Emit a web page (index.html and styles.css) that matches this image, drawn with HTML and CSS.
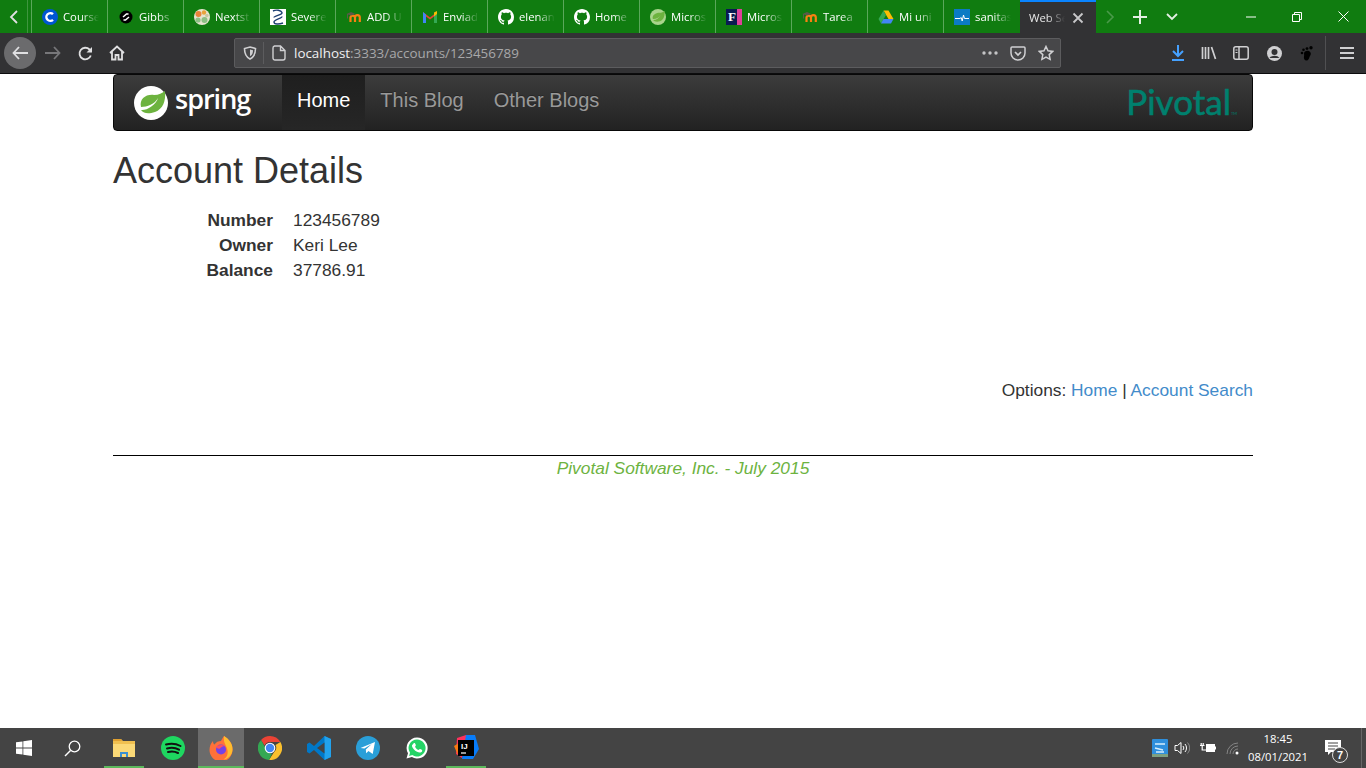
FILE: index.html
```html
<!DOCTYPE html>
<html lang="en">
<head>
    <meta charset="UTF-8">
    <title>Web Service Client</title>
    <link rel="stylesheet" href="styles.css">
</head>
<body>

<!-- browser tabs -->
<div class="tabbar">
    <div class="tab-back"><svg width="12" height="14" viewBox="0 0 12 14"><path d="M9 1L3 7l6 6" class="line-light"/></svg></div>
    <div class="tabs">
        <div class="tab"><svg class="fav" viewBox="0 0 16 16"><circle cx="8" cy="8" r="8" fill="#0056d2"/><path d="M11 5.2A3.9 3.9 0 1 0 11 10.800" fill="none" stroke="#fff" stroke-width="2.400"/></svg><span class="tab-label">Course</span></div>
        <div class="tab"><svg class="fav" viewBox="0 0 16 16"><circle cx="8" cy="8" r="6.500" fill="#000"/><path d="M5 8l3.500-3 2 0M11 8l-3.500 3-2 0" stroke="#fff" stroke-width="1.500" fill="none"/></svg><span class="tab-label">Gibbs</span></div>
        <div class="tab"><svg class="fav" viewBox="0 0 16 16"><circle cx="8" cy="8" r="8" fill="#e8e4d0"/><circle cx="4.500" cy="5" r="3" fill="#e8833a"/><circle cx="10" cy="3.500" r="2.200" fill="#e8a33a"/><circle cx="4" cy="11" r="2.600" fill="#8cc084"/><circle cx="10.500" cy="11" r="3" fill="#8cc084"/><circle cx="12.800" cy="6.500" r="1.800" fill="#c8c8a0"/></svg><span class="tab-label">Nextst</span></div>
        <div class="tab"><svg class="fav" viewBox="0 0 16 16"><rect width="16" height="16" fill="#fff"/><path d="M3 2c3-1.500 8-1 9 1.500S4 6.500 4 8.500" fill="none" stroke="#1d3f72" stroke-width="1.400"/><path d="M12 7.500c0 2-8 3-8 5.500s5 2.500 9 1" fill="none" stroke="#1d3f72" stroke-width="1.400"/></svg><span class="tab-label">Severe</span></div>
        <div class="tab"><svg class="fav" viewBox="0 0 16 16"><use href="#moodle"/></svg><span class="tab-label">ADD U</span></div>
        <div class="tab"><svg class="fav" viewBox="0 0 16 16"><path d="M1 14V3l7 5.500L15 3v11h-3V7.500L8 10.500 4 7.500V14z" fill="#ea4335"/><path d="M1 14V3l3 2.500V14z" fill="#4285f4"/><path d="M15 14V3l-3 2.500V14z" fill="#34a853"/><path d="M12 3.500L15 2v3l-3 2.500z" fill="#fbbc04"/></svg><span class="tab-label">Enviad</span></div>
        <div class="tab"><svg class="fav" viewBox="0 0 16 16"><use href="#octocat"/></svg><span class="tab-label">elenan</span></div>
        <div class="tab"><svg class="fav" viewBox="0 0 16 16"><use href="#octocat"/></svg><span class="tab-label">Home</span></div>
        <div class="tab"><svg class="fav" viewBox="0 0 34 34"><circle cx="17" cy="17" r="17" fill="#a9d48c"/><path d="M31 4c1 10-2 19-10 22-6 2-12 1-15-3C10 25 19 20 23 12c-4 7-12 10-17 9C4 13 12 8 20 8c5 0 8-2 11-4z" fill="#6db33f"/></svg><span class="tab-label">Micros</span></div>
        <div class="tab"><span class="fav fav-f">F</span><span class="tab-label">Micros</span></div>
        <div class="tab"><svg class="fav" viewBox="0 0 16 16"><use href="#moodle"/></svg><span class="tab-label">Tarea</span></div>
        <div class="tab"><svg class="fav" viewBox="0 0 16 16"><path d="M5.500 1.500h5L15.500 10h-5z" fill="#fbbc04"/><path d="M5.500 1.500L.5 10l2.500 4.500L8 6z" fill="#34a853"/><path d="M5.500 10h10L13 14.500H3z" fill="#4285f4"/></svg><span class="tab-label">Mi uni</span></div>
        <div class="tab"><svg class="fav" viewBox="0 0 16 16"><rect width="16" height="16" fill="#0b7bc4"/><path d="M1 9.500h5l1.200-1 1 3.500 1.300-6 1 3.500H15" fill="none" stroke="#fff" stroke-width="1"/></svg><span class="tab-label">sanitas</span></div>
        <div class="tab tab-active"><span class="tab-label">Web Se</span><svg class="tab-close" width="12" height="12" viewBox="0 0 12 12"><path d="M1.500 1.500l9 9M10.500 1.500l-9 9" fill="none" stroke="#c8c8ca" stroke-width="1.800"/></svg></div>
    </div>
    <div class="tab-tools">
        <svg class="tool-next" width="10" height="14" viewBox="0 0 10 14"><path d="M2 1l6 6-6 6" fill="none" stroke="#4a9a4a" stroke-width="1.600"/></svg>
        <svg class="tool-plus" width="14" height="14" viewBox="0 0 14 14"><path d="M7 0v14M0 7h14" stroke="#e4efe4" stroke-width="2"/></svg>
        <svg class="tool-down" width="12" height="8" viewBox="0 0 12 8"><path d="M1 1l5 5 5-5" fill="none" stroke="#e4efe4" stroke-width="1.800"/></svg>
    </div>
    <div class="window-btns">
        <svg width="10" height="10" viewBox="0 0 10 10"><path d="M0 5h10" stroke="#fff"/></svg>
        <svg width="10" height="10" viewBox="0 0 10 10"><path d="M.5 2.500h7v7h-7zM2.500 2.500v-2h7v7h-2" fill="none" stroke="#fff"/></svg>
        <svg width="11" height="11" viewBox="0 0 11 11"><path d="M.5.5l10 10M10.500.5l-10 10" stroke="#fff"/></svg>
    </div>
</div>

<!-- browser toolbar -->
<div class="toolbar">
    <div class="nav-btns">
        <div class="btn-back"><svg width="16" height="14" viewBox="0 0 16 14"><path d="M7 1L1.500 7 7 13M2 7h14" class="line-light"/></svg></div>
        <svg class="btn-forward" width="16" height="14" viewBox="0 0 16 14"><path d="M9 1l5.500 6L9 13M14 7H0" fill="none" stroke="#77777a" stroke-width="1.800"/></svg>
        <svg class="btn-reload" width="15" height="15" viewBox="0 0 15 15"><path d="M12.800 9.500A5.800 5.800 0 1 1 11.500 3.500L13.500 5.500" class="line-light"/><path d="M14 1v5.500H8.500z" fill="#e0e0e2"/></svg>
        <svg class="btn-home" width="16" height="16" viewBox="0 0 16 16"><path d="M1 8l7-6.500L15 8M3 6.500V14.500h3.500V10h3v4.500H13V6.500" class="line-light"/></svg>
    </div>
    <div class="urlbar">
        <svg class="url-shield" width="14" height="14" viewBox="0 0 14 14"><path d="M7 1l5.500 1.500c0 5-1.500 8.500-5.500 10.500C3 11 1.500 7.500 1.500 2.500z" fill="none" stroke="#d0d0d2" stroke-width="1.600"/><path d="M7 3.500l3 .8c0 3-.8 4.700-3 6z" fill="#d0d0d2"/></svg>
        <span class="url-sep"></span>
        <svg class="url-page" width="14" height="16" viewBox="0 0 14 16"><path d="M2.500 1h6L13 5.500V13a2 2 0 0 1-2 2H3a2 2 0 0 1-2-2V3a2 2 0 0 1 1.500-2zM8.500 1v4.500H13" fill="none" stroke="#d0d0d2" stroke-width="1.400"/></svg>
        <span class="url-text"><span class="url-host">localhost</span>:3333/accounts/123456789</span>
        <svg class="url-dots" width="16" height="4" viewBox="0 0 16 4"><circle cx="2" cy="2" r="1.700"/><circle cx="8" cy="2" r="1.700"/><circle cx="14" cy="2" r="1.700"/></svg>
        <svg class="url-pocket" width="16" height="15" viewBox="0 0 16 15"><path d="M2 1h12a1 1 0 0 1 1 1v5a7 7 0 0 1-14 0V2a1 1 0 0 1 1-1z" fill="none" stroke="#d0d0d2" stroke-width="1.500"/><path d="M5 6l3 3 3-3" fill="none" stroke="#d0d0d2" stroke-width="1.700"/></svg>
        <svg class="url-star" width="16" height="16" viewBox="0 0 16 16"><path d="M8 1.500l2 4.300 4.700.6-3.500 3.200.9 4.700L8 12l-4.100 2.300.9-4.700L1.300 6.400 6 5.800z" fill="none" stroke="#d0d0d2" stroke-width="1.500"/></svg>
    </div>
    <div class="tool-icons">
        <svg width="14" height="16" viewBox="0 0 14 16"><path d="M7 0v10M2 6l5 5 5-5" fill="none" stroke="#45a1ff" stroke-width="2"/><path d="M1 15h12" stroke="#45a1ff" stroke-width="2"/></svg>
        <svg width="16" height="14" viewBox="0 0 16 14"><path d="M1.500 1v12M4.500 1v12M7.500 1v12M10.500 1l4 12" fill="none" stroke="#d0d0d2" stroke-width="1.700"/></svg>
        <svg width="16" height="14" viewBox="0 0 16 14"><rect x=".8" y=".8" width="14.400" height="12.400" rx="2" fill="none" stroke="#d0d0d2" stroke-width="1.500"/><path d="M6 1v12" stroke="#d0d0d2" stroke-width="1.500"/><path d="M2.500 4h2M2.500 6.500h2" stroke="#d0d0d2"/></svg>
        <svg class="tool-account" width="15" height="15" viewBox="0 0 15 15"><circle cx="7.500" cy="7.500" r="7.500" fill="#d0d0d2"/><circle cx="7.500" cy="6" r="3" fill="#323234"/><path d="M2.500 12a5.500 4 0 0 1 10 0z" fill="#323234"/></svg>
        <svg class="tool-foot" width="14" height="15" viewBox="0 0 14 15"><path d="M4.500 6c2-2 5-1.500 6 .5s-.5 3-1 4.500-1 3.500-3 3.500-3-2-2.500-4-.5-3 .5-4.500z"/><circle cx="2" cy="7" r="1.300"/><circle cx="3.500" cy="3.800" r="1.300"/><circle cx="7" cy="2.600" r="1.400"/><circle cx="11" cy="1.800" r="1.700"/></svg>
        <span class="tool-sep"></span>
        <svg class="tool-menu" width="14" height="12" viewBox="0 0 14 12"><path d="M0 1h14M0 6h14M0 11h14" stroke="#d0d0d2" stroke-width="1.800"/></svg>
    </div>
</div>

<!-- the page itself -->
<div class="page">
    <div class="container">
        <div class="navbar">
            <div class="brand">
                <svg width="34" height="34" viewBox="0 0 34 34"><circle cx="17" cy="17" r="17" fill="#fff"/><path d="M31 5c1 10-2 18-10 21-6 2-11 2-14-2 5 1 15-5 17-12-3 6-11 9-17 9C5 13 12 8 20 9c5 0 8-2 11-4z" fill="#6db33f"/></svg>
                <span class="brand-name">spring</span>
            </div>
            <ul class="nav-links">
                <li class="active"><a href="#">Home</a></li>
                <li><a href="#">This Blog</a></li>
                <li><a href="#">Other Blogs</a></li>
            </ul>
            <div class="pivotal">Pivotal<small>TM</small></div>
        </div>

        <h1>Account Details</h1>

        <dl class="details">
            <dt>Number</dt><dd>123456789</dd>
            <dt>Owner</dt><dd>Keri Lee</dd>
            <dt>Balance</dt><dd>37786.91</dd>
        </dl>

        <p class="options">Options: <a href="#">Home</a> | <a href="#">Account Search</a></p>

        <hr>
        <p class="footer">Pivotal Software, Inc. - July 2015</p>
    </div>
</div>

<!-- windows taskbar -->
<div class="taskbar">
    <div class="task-start"><svg width="16" height="16" viewBox="0 0 16 16"><path d="M0 2.300l6.500-.9v6.200H0zM7.300 1.300L16 0v7.600H7.300zM0 8.400h6.500v6.200L0 13.700zM7.300 8.400H16V16l-8.700-1.300z" fill="#fff"/></svg></div>
    <div class="task-search"><svg width="17" height="17" viewBox="0 0 17 17"><circle cx="10.500" cy="6.500" r="5.300" fill="none" stroke="#fff" stroke-width="1.300"/><path d="M6.500 10.500L1 16" stroke="#fff" stroke-width="1.500"/></svg></div>
    <div class="task-apps">
        <div class="app running"><svg width="22" height="20" viewBox="0 0 22 20"><path d="M0 1h8l2 2h12v16H0z" fill="#f0c050"/><path d="M0 1h8l1 2H0z" fill="#e0a030"/><path d="M0 6h22v13H0z" fill="#fbd977"/><path d="M7 14h8v5H7z" fill="#3b8fd0"/><path d="M9 16h4v3H9z" fill="#fbd977"/></svg></div>
        <div class="app"><svg width="24" height="24" viewBox="0 0 24 24"><circle cx="12" cy="12" r="12" fill="#1ed760"/><path d="M5 8.500c5-1.500 10-1 14.500 1.500M6 12.500c4.500-1.200 8.500-.8 12 1.200M7 16c3.500-.9 7-.6 10 1" fill="none" stroke="#111" stroke-width="2" stroke-linecap="round"/></svg></div>
        <div class="app running current"><svg width="24" height="24" viewBox="0 0 24 24"><path d="M15 0c5 3 9 8 8.500 14a11.500 11.500 0 0 1-23 0C.5 10 2 7 4 5c0 2 .5 3 1.500 3.500C7 6 9.500 5 12 5c1-2 2-4 3-5z" fill="#ff7139"/><path d="M15 0c5 3 9 8 8.500 14-.5 5-4 9-9 9.500 4-2 5-7 3.500-11C17 9 14 6 15 0z" fill="#ffbd2e"/><circle cx="12" cy="13.500" r="5" fill="#7542e5"/><path d="M7 11c2-2 6-3 9-1-2 0-4 1-5 2.500-1.500.5-3 0-4-1.500z" fill="#ff4f5e"/></svg></div>
        <div class="app"><svg width="24" height="24" viewBox="0 0 24 24"><path d="M12 0a12 12 0 0 1 10.400 6H12a6 6 0 0 0-5.500 3.600L3 4a12 12 0 0 1 9-4z" fill="#ea4335"/><path d="M22.400 6A12 12 0 0 1 11 24l4.800-7.500A6 6 0 0 0 17.500 9z" fill="#fbc02d"/><path d="M3 4l5 8.800A6 6 0 0 0 14 17.700L11 24A12 12 0 0 1 3 4z" fill="#34a853"/><circle cx="12" cy="12" r="5.300" fill="#fff"/><circle cx="12" cy="12" r="4.200" fill="#4285f4"/></svg></div>
        <div class="app"><svg width="24" height="24" viewBox="0 0 24 24"><path d="M17.500 0L24 3v18l-6.500 3L7 14l-4.500 3.500L0 16V8l2.500-1.500L7 10z" fill="#0078c8"/><path d="M17.500 0L24 3v18l-6.500 3z" fill="#22a2ec"/><path d="M17.500 6.500L10 12l7.500 5.500z" fill="#444"/></svg></div>
        <div class="app"><svg width="24" height="24" viewBox="0 0 24 24"><circle cx="12" cy="12" r="12" fill="#2a9fd8"/><path d="M4.500 12L19 6l-2.300 12-4.200-3-2.300 2.200-.4-3.700 6-5.500-7.400 4.600z" fill="#fff"/></svg></div>
        <div class="app"><svg width="24" height="24" viewBox="0 0 24 24"><path d="M12 1.500a10.500 10.500 0 0 0-9 15.800L1.500 22.500l5.400-1.400A10.500 10.500 0 1 0 12 1.500z" fill="#fff"/><path d="M12 3.500a8.500 8.500 0 0 0-7 13.200l-.9 3.200 3.300-.8A8.500 8.500 0 1 0 12 3.500z" fill="#25d366"/><path d="M8.500 7.500c1-1 1.500-.5 2.300 1.400.3.700-.8 1.400-.7 1.900.5 1.300 2 2.800 3.300 3.200.6 0 1-1.100 1.700-.9 2 .9 2.500 1.200 1.900 2.300-.8 1.300-2.800 1.500-5 .4-2.500-1.200-4.500-3.500-5-5.500-.2-1 .5-1.800 1.500-2.800z" fill="#fff"/></svg></div>
        <div class="app running"><svg width="26" height="26" viewBox="0 0 26 26"><path d="M4 3l9-3 4 5-8 18-6-4z" fill="#fe315d"/><path d="M13 0h9l4 14-6 10H9z" fill="#087cfa"/><path d="M1 11l5-3 4 9-5 3z" fill="#f97a12"/><rect x="5" y="5" width="16" height="16" fill="#000"/><text x="8" y="13.500" class="ij-text">IJ</text><path d="M8 18h5" stroke="#fff" stroke-width="1.200"/></svg></div>
    </div>
    <div class="tray">
        <svg class="tray-display" width="16" height="18" viewBox="0 0 16 18"><rect width="16" height="18" rx="1" fill="#2f8fdc"/><path d="M3 5h10M3 9l8 2M4 13h8" stroke="#d6eefc" stroke-width="1.300"/><path d="M0 15h16v3H0z" fill="#7ea080"/></svg>
        <svg width="16" height="14" viewBox="0 0 16 14"><path d="M1 4.500h2.500L7 1.500v11l-3.500-3H1z" fill="none" stroke="#fff"/><path d="M9 5a3 3 0 0 1 0 4M11 3a6 6 0 0 1 0 8" fill="none" stroke="#fff"/><path d="M13.500 1.500a8 8 0 0 1 0 11" fill="none" stroke="#888"/></svg>
        <svg width="16" height="12" viewBox="0 0 16 12"><path d="M6 2h9v8H6z" fill="#fff"/><path d="M15 4.500h1v3h-1z" fill="#fff"/><path d="M0 3.500h4.500M1.200 1v2.500M3.200 1v2.500M2.200 3.500V8H6" fill="none" stroke="#fff" stroke-width="1.200"/></svg>
        <svg width="14" height="13" viewBox="0 0 14 13"><path d="M1 12A11 11 0 0 1 12 1M4 12a8 8 0 0 1 8-8M7 12a5 5 0 0 1 5-5" fill="none" stroke="#858585"/><circle cx="11" cy="11" r="1.500" fill="#fff"/></svg>
    </div>
    <div class="clock"><div>18:45</div><div>08/01/2021</div></div>
    <div class="notify">
        <svg width="16" height="16" viewBox="0 0 16 16"><path d="M0 0h16v12H6l-3 3v-3H0z" fill="#fff"/><path d="M3 3h10M3 6h10M3 9h7" stroke="#444"/></svg>
        <span class="badge">7</span>
    </div>
</div>

<!-- shared icons -->
<svg class="defs" width="0" height="0">
    <symbol id="octocat" viewBox="0 0 16 16"><path fill="#fff" d="M8 0C3.580 0 0 3.580 0 8c0 3.540 2.290 6.530 5.470 7.590.4.070.55-.17.55-.38 0-.19-.01-.82-.01-1.490-2.010.37-2.530-.49-2.690-.94-.09-.23-.48-.94-.82-1.130-.28-.15-.68-.52-.01-.53.63-.01 1.080.58 1.230.82.720 1.210 1.870.87 2.330.66.070-.52.28-.87.51-1.070-1.780-.2-3.640-.89-3.640-3.950 0-.87.31-1.590.82-2.150-.08-.2-.36-1.020.08-2.120 0 0 .67-.21 2.200.82.64-.18 1.320-.27 2-.27.68 0 1.360.09 2 .27 1.530-1.040 2.200-.82 2.200-.82.44 1.100.16 1.920.08 2.120.51.56.82 1.270.82 2.150 0 3.070-1.870 3.750-3.650 3.950.29.25.54.73.54 1.480 0 1.070-.01 1.930-.01 2.200 0 .21.15.46.55.38A8.013 8.013 0 0 0 16 8c0-4.420-3.580-8-8-8z"/></symbol>
    <symbol id="moodle" viewBox="0 0 16 16"><path d="M4.500 13V8.500a2.300 2.300 0 0 1 4.500 0V13M9 8.500a2.300 2.300 0 0 1 4.800 0V13" fill="none" stroke="#f98012" stroke-width="2.200"/><path d="M.5 5L5 3l4.500 2L5 6.500z" fill="#5a5a4a"/><path d="M1.500 5v4.500" stroke="#5a5a4a"/></symbol>
</svg>

</body>
</html>
```

FILE: styles.css
```css
* {
    box-sizing: border-box;
}
html, body {
    margin: 0;
    height: 100%;
    overflow: hidden;
}
body {
    display: flex;
    flex-direction: column;
    height: 768px;
    font-family: "Liberation Sans", Arial, sans-serif;
    color: #333;
    background-color: #fff;
}
.line-light {
    fill: none;
    stroke: #e0e0e2;
    stroke-width: 1.800;
}
.defs {
    position: absolute;
}

/* tabs */
.tabbar {
    display: flex;
    align-items: stretch;
    height: 33px;
    flex: none;
    background-color: #107c10;
    color: #fff;
    font-family: "Open Sans", sans-serif;
    font-size: 11.3px;
}
.tab-back {
    display: flex;
    align-items: center;
    width: 28px;
    padding-left: 8px;
    border-right: 1px solid #3f963f;
    margin-right: 3px;
}
.tabs {
    display: flex;
}
.tab {
    display: flex;
    align-items: center;
    gap: 5px;
    width: 76px;
    padding-left: 10px;
    border-left: 1px solid #5aa75a;
    overflow: hidden;
}
.fav {
    width: 16px;
    height: 16px;
    flex: none;
}
.fav-f {
    display: block;
    background: linear-gradient(to right, #0a1a52 70%, #e0409a 70%);
    color: #fff;
    font: bold 13px/16px "Liberation Serif", serif;
    padding-left: 2px;
}
.tab-label {
    width: 40px;
    white-space: nowrap;
    -webkit-mask-image: linear-gradient(to right, #000 45%, transparent 90%);
    mask-image: linear-gradient(to right, #000 45%, transparent 90%);
}
.tab-active {
    gap: 3px;
    margin-left: 1px;
    padding-left: 9px;
    border-left: none;
    background-color: #323234;
    border-top: 2px solid #0a84ff;
    color: #e8e8e8;
}
.tab-tools {
    display: flex;
    align-items: center;
    padding-left: 9px;
}
.tool-plus {
    margin-left: 18px;
}
.tool-down {
    margin-left: 19px;
}
.window-btns {
    display: flex;
    align-items: center;
    gap: 36px;
    margin-left: auto;
    padding-right: 17px;
}

/* toolbar */
.toolbar {
    display: flex;
    align-items: center;
    height: 41px;
    flex: none;
    background-color: #323234;
    border-bottom: 1px solid #0c0c0d;
}
.nav-btns {
    display: flex;
    align-items: center;
    width: 234px;
    padding-left: 4px;
}
.btn-back {
    display: flex;
    align-items: center;
    justify-content: center;
    width: 32px;
    height: 32px;
    border-radius: 50%;
    background-color: #6b6b6d;
}
.btn-forward {
    margin-left: 9px;
}
.btn-reload {
    margin-left: 17px;
}
.btn-home {
    margin-left: 16px;
}
.urlbar {
    display: flex;
    align-items: center;
    width: 827px;
    height: 30px;
    padding-left: 8px;
    background-color: #474749;
    border: 1px solid #5c5c5e;
    border-radius: 2px;
}
.url-sep {
    width: 1px;
    height: 22px;
    margin-left: 6px;
    background-color: #5c5c5e;
}
.url-page {
    margin-left: 8px;
}
.url-text {
    margin-left: 8px;
    font-family: "Open Sans", sans-serif;
    font-size: 13.4px;
    color: #a8a8aa;
    white-space: nowrap;
}
.url-host {
    color: #f0f0f2;
}
.url-dots {
    margin-left: auto;
    fill: #c4c4c6;
}
.url-pocket {
    margin-left: 12px;
}
.url-star {
    margin-left: 12px;
    margin-right: 6px;
}
.tool-icons {
    display: flex;
    align-items: center;
    gap: 16px;
    margin-left: 110px;
}
.tool-account {
    margin-left: 2px;
}
.tool-foot {
    margin-left: 2px;
}
.tool-sep {
    width: 1px;
    height: 34px;
    margin-left: -5px;
    background-color: #505052;
}
.tool-menu {
    margin-left: -2px;
}

/* page */
.page {
    flex: 1;
    background-color: #fff;
}
.container {
    width: 1140px;
    margin: 0 auto;
    font-size: 17.35px;
    line-height: 25px;
}
.navbar {
    display: flex;
    align-items: stretch;
    height: 57px;
    border: 1px solid #080808;
    border-radius: 4px;
    background-image: linear-gradient(to bottom, #3c3c3c, #222);
}
.brand {
    display: flex;
    align-items: center;
    gap: 7px;
    width: 168px;
    padding-left: 20px;
}
.brand-name {
    padding-bottom: 9px;
    font-family: "Open Sans", sans-serif;
    font-size: 27px;
    font-weight: 600;
    letter-spacing: -1px;
    color: #fff;
}
.nav-links {
    display: flex;
    margin: 0;
    padding: 0;
    list-style: none;
    font-size: 20px;
}
.nav-links a {
    display: block;
    height: 55px;
    padding: 12px 15px;
    line-height: 27px;
    color: #999;
    text-decoration: none;
    text-shadow: 0 -1px 0 rgba(0, 0, 0, 0.25);
}
.nav-links .active a {
    color: #fff;
    background-image: linear-gradient(to bottom, #1f1f1f, #262626);
}
.pivotal {
    margin-left: auto;
    padding: 7px 15px 0 0;
    font-family: "Lato", sans-serif;
    font-size: 35px;
    line-height: 38px;
    color: #00806e;
    -webkit-text-stroke: 0.6px #00806e;
}
.pivotal small {
    font-size: 4px;
    -webkit-text-stroke: 0;
}
h1 {
    margin: 20px 0 17px;
    font-size: 36px;
    font-weight: 400;
    line-height: 40px;
}
.details {
    display: grid;
    grid-template-columns: 160px 1fr;
    column-gap: 20px;
    margin: 0;
}
.details dt {
    font-weight: 700;
    text-align: right;
}
.details dd {
    margin: 0;
}
.options {
    margin: 95px 0 0;
    text-align: right;
}
.options a {
    color: #428bca;
    text-decoration: none;
}
hr {
    margin: 52px 0 0;
    border: none;
    border-top: 1px solid #000;
}
.footer {
    margin: 0;
    text-align: center;
    font-style: italic;
    color: #6db33f;
}

/* taskbar */
.taskbar {
    display: flex;
    align-items: center;
    height: 40px;
    flex: none;
    background-color: #444;
    color: #fff;
}
.task-start {
    display: flex;
    justify-content: center;
    width: 48px;
}
.task-search {
    display: flex;
    justify-content: center;
    width: 48px;
}
.task-apps {
    display: flex;
    align-items: stretch;
    height: 40px;
    margin-left: 3px;
}
.app {
    display: flex;
    align-items: center;
    justify-content: center;
    width: 49px;
    height: 40px;
}
.app.running {
    background: linear-gradient(#5cb85c, #5cb85c) center bottom / 40px 2px no-repeat;
}
.app.current {
    width: 46px;
    margin: 0 1px;
    background: linear-gradient(#5cb85c, #5cb85c) center bottom / 46px 2px no-repeat, #6b6b6b;
}
.ij-text {
    font: bold 8px "Liberation Sans", sans-serif;
    fill: #fff;
}
.tray {
    display: flex;
    align-items: center;
    gap: 10px;
    margin-left: auto;
}
.tray-display {
    margin-right: -4px;
}
.clock {
    width: 70px;
    margin: 0 9px 0 3px;
    font-family: "Open Sans", sans-serif;
    font-size: 11.3px;
    line-height: 18px;
    text-align: center;
}
.notify {
    position: relative;
    display: flex;
    width: 40px;
    height: 40px;
    padding: 12px 0 0 3px;
    margin-right: 4px;
    border-right: 1px solid #666;
}
.badge {
    position: absolute;
    left: 10px;
    top: 19px;
    width: 16px;
    height: 16px;
    border: 1px solid #ddd;
    border-radius: 50%;
    background-color: #444;
    font: bold 11px/14px "Liberation Sans", sans-serif;
    text-align: center;
}
```
